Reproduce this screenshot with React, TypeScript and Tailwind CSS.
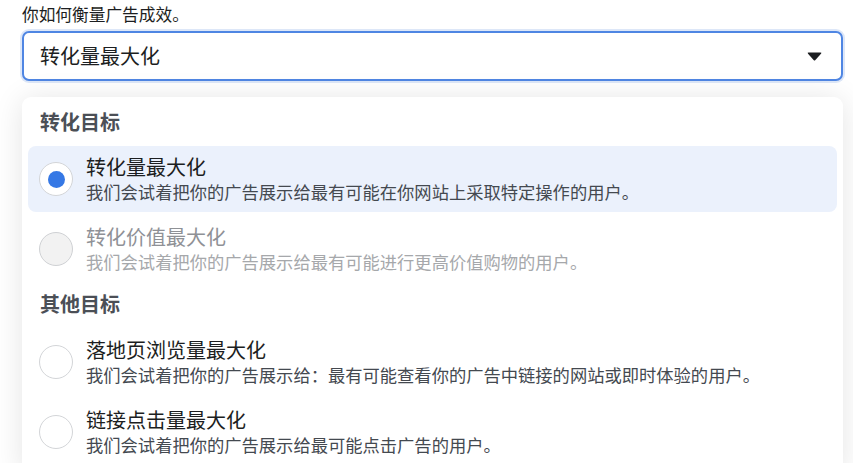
import React from "react";

const font = { fontFamily: '"Noto Sans CJK SC", "Noto Sans", sans-serif' };

type Opt = { title: string; desc: string; selected?: boolean; disabled?: boolean };

function Radio({ selected, disabled }: { selected?: boolean; disabled?: boolean }) {
  return (
    <div
      className={
        "flex h-[34px] w-[34px] shrink-0 items-center justify-center rounded-full border-[1.5px] " +
        (disabled ? "border-[#cfd1d4] bg-[#f2f2f2]" : "border-[#d3d5d8] bg-white")
      }
    >
      {selected && <div className="h-[17px] w-[17px] rounded-full bg-[#3578e5]" />}
    </div>
  );
}

function Row({ o }: { o: Opt }) {
  return (
    <div
      className={
        "flex h-[66px] items-center rounded-[8px] pl-[11px] " + (o.selected ? "bg-[#ebf1fc]" : "")
      }
    >
      <Radio selected={o.selected} disabled={o.disabled} />
      <div className="ml-[13px] flex flex-col pb-[1px]">
        <div
          className={
            "text-[20px] leading-[26px] " + (o.disabled ? "text-[#8f9196]" : "text-[#1c1e21]")
          }
        >
          {o.title}
        </div>
        <div
          className={
            "text-[17.3px] leading-[24px] " + (o.disabled ? "text-[#a6a8ab]" : "text-[#444950]")
          }
        >
          {o.desc}
        </div>
      </div>
    </div>
  );
}

export default function App() {
  const g1: Opt[] = [
    {
      title: "转化量最大化",
      desc: "我们会试着把你的广告展示给最有可能在你网站上采取特定操作的用户。",
      selected: true,
    },
    {
      title: "转化价值最大化",
      desc: "我们会试着把你的广告展示给最有可能进行更高价值购物的用户。",
      disabled: true,
    },
  ];
  const g2: Opt[] = [
    {
      title: "落地页浏览量最大化",
      desc: "我们会试着把你的广告展示给：最有可能查看你的广告中链接的网站或即时体验的用户。",
    },
    {
      title: "链接点击量最大化",
      desc: "我们会试着把你的广告展示给最可能点击广告的用户。",
    },
  ];
  return (
    <div className="h-[463px] w-[853px] overflow-hidden bg-white" style={font}>
      <div className="ml-[22px] w-[821px] pt-[2px]">
        <div className="h-[24px] text-[16.7px] leading-[24px] text-[#1c1e21]">你如何衡量广告成效。</div>
        <div className="mt-[5px] flex h-[50px] items-center justify-between rounded-[7px] border-2 border-[#4f86e3] bg-white pl-[16px] pr-[19px] shadow-[0_0_0_2px_#dde7f8]">
          <span className="text-[20px] leading-[26px] text-[#1c1e21]">转化量最大化</span>
          <svg width="15" height="9" viewBox="0 0 15 9">
            <path d="M1.5 0.5 H13.5 Q15 0.5 14 1.7 L8.4 8 Q7.5 9 6.6 8 L1 1.7 Q0 0.5 1.5 0.5 Z" fill="#1c1e21" />
          </svg>
        </div>
        <div className="mt-[16px] rounded-[9px] bg-white px-[6px] pt-[11px] shadow-[0_2px_30px_rgba(0,0,0,0.11)]">
          <div className="pl-[12px] text-[20px] font-bold leading-[28px] text-[#4b4f56]">转化目标</div>
          <div className="mt-[10px] flex flex-col gap-[4px]">
            {g1.map((o) => (
              <Row key={o.title} o={o} />
            ))}
          </div>
          <div className="mt-[8px] pl-[12px] text-[20px] font-bold leading-[28px] text-[#4b4f56]">其他目标</div>
          <div className="mt-[11px] flex flex-col gap-[4px] pb-[10px]">
            {g2.map((o) => (
              <Row key={o.title} o={o} />
            ))}
          </div>
        </div>
      </div>
    </div>
  );
}
